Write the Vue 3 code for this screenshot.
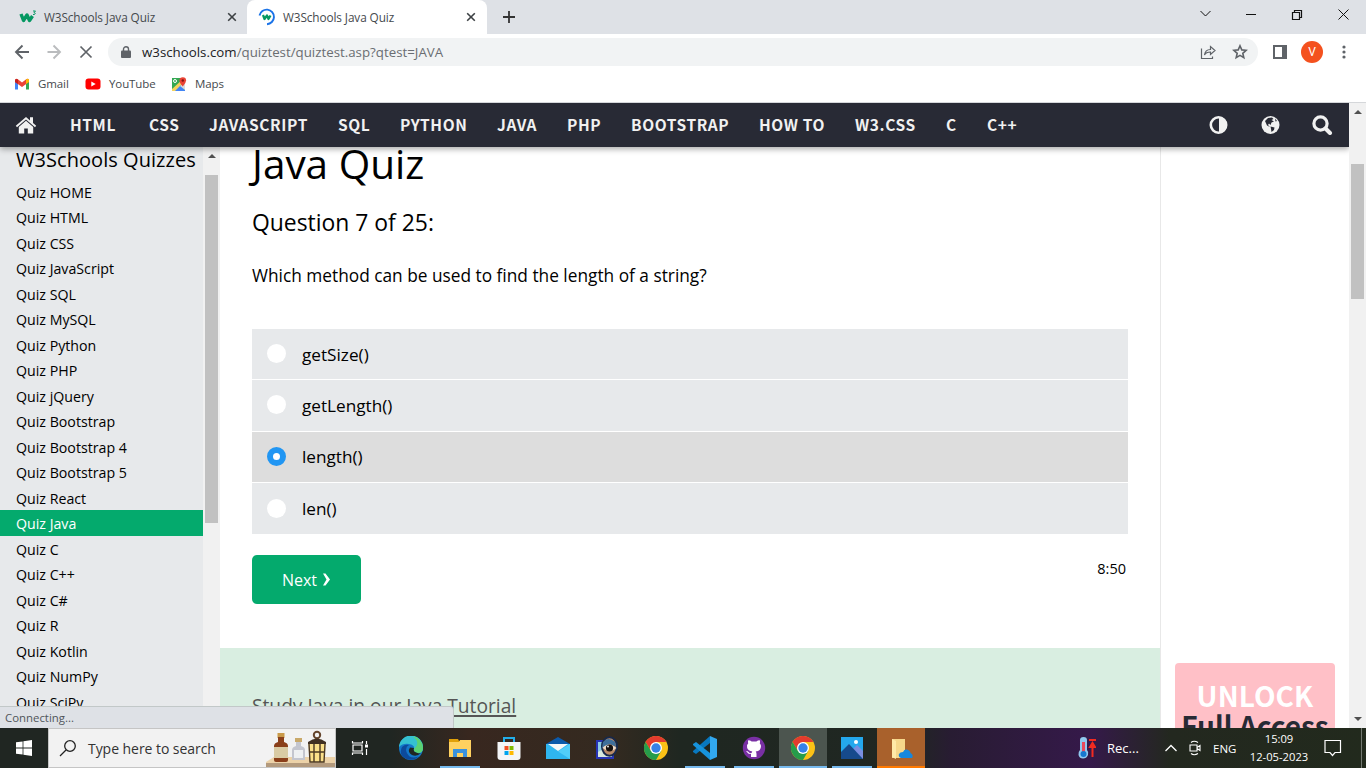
<script setup>
const navItems = ['HTML', 'CSS', 'JAVASCRIPT', 'SQL', 'PYTHON', 'JAVA', 'PHP', 'BOOTSTRAP', 'HOW TO', 'W3.CSS', 'C', 'C++']
const quizzes = ['HOME', 'HTML', 'CSS', 'JavaScript', 'SQL', 'MySQL', 'Python', 'PHP', 'jQuery', 'Bootstrap', 'Bootstrap 4', 'Bootstrap 5', 'React', 'Java', 'C', 'C++', 'C#', 'R', 'Kotlin', 'NumPy', 'SciPy']
const answers = ['getSize()', 'getLength()', 'length()', 'len()']
const apps = [
  { id: 'edge' },
  { id: 'explorer', open: true },
  { id: 'store' },
  { id: 'mail' },
  { id: 'eye' },
  { id: 'chrome' },
  { id: 'code', open: true },
  { id: 'github', open: true },
  { id: 'chrome', open: true, active: true },
  { id: 'photos', open: true },
  { id: 'drive', alert: true },
]
</script>

<template>
  <div class="screen">
    <div class="tabs">
      <div class="tab first">
        <svg class="fav" viewBox="0 0 18 18"><path d="M2 6l2.500 6.500L8 7l2.500 5.500L13.500 8" fill="none" stroke="#059862" stroke-width="3.400" stroke-linejoin="round" /><path d="M14 3h2.500L15 4.600c2 0 1.500 2.500-1 1.800" fill="none" stroke="#059862" /></svg>
        <span class="tab-title">W3Schools Java Quiz</span>
        <svg class="x" viewBox="0 0 10 10"><path d="M1.200 1.200l7.600 7.600M8.800 1.200l-7.600 7.600" /></svg>
      </div>
      <div class="tab current">
        <svg class="fav" viewBox="0 0 18 18"><path d="M1.500 7.500A7.300 7.300 0 1 1 9 16.200" fill="none" stroke="#1a73e8" stroke-width="1.900" /><path d="M5 7l1.500 4L9 7.500l1.500 3.500 2-3.500" fill="none" stroke="#059862" stroke-width="2.200" stroke-linejoin="round" /></svg>
        <span class="tab-title">W3Schools Java Quiz</span>
        <svg class="x" viewBox="0 0 10 10"><path d="M1.200 1.200l7.600 7.600M8.800 1.200l-7.600 7.600" /></svg>
      </div>
      <svg class="plus" viewBox="0 0 12 12"><path d="M6 0v12M0 6h12" stroke="#333" stroke-width="1.800" /></svg>
      <svg class="winctl" viewBox="0 0 160 20" fill="none" stroke="#111"><path d="M4.500 8l5 5 5-5" /><path d="M50 11.500h10" /><path d="M96.500 9.500h7v7h-7zM98.500 9.500v-2h7v7h-2" stroke-width="1.200" /><path d="M142.500 6.500l10 10M152.500 6.500l-10 10" /></svg>
    </div>

    <div class="toolbar">
      <svg class="arrows" viewBox="0 0 84 20" fill="none" stroke-width="1.900"><path d="M15 10H2.500M8.500 3.500L2 10l6.500 6.500" stroke="#5f6368" /><path d="M33.500 10H46M39.500 3.500L46 10l-6.500 6.500" stroke="#babcbe" /><path d="M66.500 4.500l11 11M77.500 4.500l-11 11" stroke="#5f6368" stroke-width="1.700" /></svg>
      <div class="address">
        <svg class="lock" viewBox="0 0 10 12"><path d="M1 4.500h8q1 0 1 1V11q0 1-1 1H1q-1 0-1-1V5.500q0-1 1-1z" fill="#5f6368" /><path d="M2.500 5V3a2.500 2.200 0 0 1 5 0v2" fill="none" stroke="#5f6368" stroke-width="1.400" /></svg>
        <span class="url"><b>w3schools.com</b>/quiztest/quiztest.asp?qtest=JAVA</span>
        <svg class="share" viewBox="0 0 48 16" fill="none" stroke="#5f6368" stroke-width="1.200"><path d="M1.500 4.500v10h11v-2" /><path d="M4.500 11c.5-4 3-5.500 6-5.500V2.500l4.500 4-4.500 4v-2.500c-3 0-5 1-6 3z" /><path d="M40 1.800l1.800 4.100 4.300.4-3.300 3 1 4.400-3.800-2.300-3.800 2.300 1-4.400-3.300-3 4.300-.4z" stroke-width="1.600" /></svg>
      </div>
      <svg class="panel" viewBox="0 0 14 14"><path d="M1 1h12v12H1z" fill="#fff" stroke="#5f6368" stroke-width="2" /><path d="M9 1h5v12H9z" fill="#5f6368" /></svg>
      <span class="avatar">V</span>
      <svg class="dots" viewBox="0 0 4 14" fill="#5f6368"><circle cx="2" cy="2" r="1.600" /><circle cx="2" cy="7" r="1.600" /><circle cx="2" cy="12" r="1.600" /></svg>
    </div>

    <div class="bookmarks">
      <svg viewBox="0 0 16 14"><path d="M1 3v9.500h3V6z" fill="#4285f4" /><path d="M12 6v6.500h3V3z" fill="#34a853" /><path d="M1 3.500Q1 1 3.500 2L8 5.500 12.500 2Q15 1 15 3.500V5L8 10 1 5z" fill="#ea4335" /><path d="M12 2.500Q15 .5 15 3.500V5l-3 2z" fill="#fbbc04" /><path d="M1 3.500Q1 1 4 2.500V7L1 5z" fill="#c5221f" /></svg>
      <span class="gm">Gmail</span>
      <svg viewBox="0 0 16 14"><rect x=".5" y="1.500" width="15" height="11" rx="3" fill="#f00" /><path d="M6.300 4.500v5l4.400-2.500z" fill="#fff" /></svg>
      <span class="yt">YouTube</span>
      <svg viewBox="0 0 16 14"><path d="M1 1h13v13H1z" fill="#34a853" /><path d="M3 14l6-6 5 5v1z" fill="#4285f4" /><path d="M1 14V12L11 3l2 2-9 9z" fill="#f4d35c" /><path d="M9 9l5-4v8z" fill="#dadce0" /><circle cx="4" cy="4" r="1.500" fill="none" stroke="#fff" /><path d="M8.500 3.500a3.300 3.300 0 0 1 6.600 0Q15 6 11.800 9.500 8.500 6 8.500 3.500z" fill="#ea4335" /><circle cx="11.800" cy="3.500" r="1.200" fill="#811411" /></svg>
      <span class="mp">Maps</span>
    </div>

    <div class="viewport">
      <div class="site">
        <nav class="nav">
          <svg class="home" viewBox="0 0 22 18" fill="#f1f1f1"><path d="M11 1L.8 9.800l1.200 1.400L11 3.500l9 7.700 1.200-1.400L18 7V1.200h-3v3.200z" /><path d="M11 4.800L3.800 11v6.500h5.400v-5h3.600v5h5.400V11z" /></svg>
          <div class="links"><span v-for="n in navItems" :key="n">{{ n }}</span></div>
          <svg class="tools" viewBox="0 0 124 20"><circle cx="9.500" cy="10" r="7.700" fill="none" stroke="#f1f1f1" stroke-width="2.600" /><path d="M10 2a8 8 0 0 1 0 16z" fill="#f1f1f1" /><circle cx="61.500" cy="10" r="9" fill="#f1f1f1" /><path d="M56 6l3-3 4-.5 1.500 1.500-2 1 2.500 1.500-2.500 1-1 2.500-1.500-1.500-1 1.500 2 2-3-1.500zM61.500 11.500l4 1-.5 2.500-2.500 2-.5-3zM66 3.500l2 2.500-1.500.5z" fill="#282a35" /><circle cx="111.500" cy="8.500" r="6.600" fill="none" stroke="#f1f1f1" stroke-width="3.200" /><path d="M116.500 13.500l4.500 4.500" stroke="#f1f1f1" stroke-width="4" stroke-linecap="round" /></svg>
        </nav>
        <div class="columns">
          <aside class="side">
            <h2>W3Schools Quizzes</h2>
            <ul><li v-for="q in quizzes" :key="q" :class="{ on: q === 'Java' }">Quiz {{ q }}</li></ul>
          </aside>
          <div class="scroll inner"><i class="up"></i><div class="thumb"></div></div>
          <main class="main">
            <div class="quiz">
              <h1>Java Quiz</h1>
              <h3>Question 7 of 25:</h3>
              <p class="question">Which method can be used to find the length of a string?</p>
              <div class="answers">
                <label v-for="a in answers" :key="a" class="answer" :class="{ picked: a === 'length()' }"><i class="radio"></i><span>{{ a }}</span></label>
              </div>
              <div class="submit">
                <button>Next <svg viewBox="0 0 9 13"><path d="M1 .5h2.500l4.500 6-4.500 6H1l3.500-6z" fill="#fff" /></svg></button>
                <span class="timer">8:50</span>
              </div>
            </div>
            <div class="study"><a>Study Java in our Java Tutorial</a></div>
          </main>
          <div class="right">
            <div class="promo"><div class="unlock">UNLOCK</div><div class="full">Full Access</div></div>
          </div>
        </div>
      </div>
      <div class="scroll outer"><i class="up"></i><div class="thumb"></div><i class="down"></i></div>
      <div class="status">Connecting...</div>
    </div>

    <div class="taskbar">
      <div class="start"><svg viewBox="0 0 16 16" fill="#fff"><path d="M0 2.300L6.600 1.400v6.200H0zM7.400 1.300L16 0v7.600H7.400zM0 8.400h6.600v6.200L0 13.700zM7.400 8.400H16V16l-8.600-1.300z" /></svg></div>
      <div class="search">
        <svg class="glass" viewBox="0 0 18 18" fill="none" stroke="#222" stroke-width="1.300"><circle cx="11" cy="7" r="5.300" /><path d="M7 11l-6 6" /></svg>
        <span>Type here to search</span>
        <svg class="bottles" viewBox="0 0 69 38">
          <path d="M0 33l8-5h61v10H0z" fill="#ecd2a8" /><path d="M0 34h69v4H0z" fill="#b39a7d" />
          <path d="M11.500 4h7v5h-7z" fill="#c99a4a" /><path d="M12 8h6v5q4 1 4 4v14q0 2-2 2h-10q-2 0-2-2V17q0-3 4-4z" fill="#8a3f1a" /><path d="M8 18h14v11H8z" fill="#d9cba4" />
          <path d="M29 9h7v4h-7z" fill="#c9a96a" /><path d="M30 13h5v4q4 1 4 4v10H26V21q0-3 4-4z" fill="#c4c6cf" /><path d="M28 21h9v8h-9z" fill="#eef0f2" />
          <circle cx="51" cy="6" r="3.200" fill="none" stroke="#65452d" stroke-width="2" /><path d="M42 13q9-7 18 0v2H42z" fill="#403022" /><path d="M42.500 15h17l-1 18h-15z" fill="#fbe08a" /><path d="M48 15v18M54 15v18M43 15l1 18h14l1-18M43 23h16" fill="none" stroke="#4b3823" stroke-width="1.400" />
        </svg>
      </div>
      <div class="taskview"><svg viewBox="0 0 18 16" fill="none" stroke="#fff" stroke-width="1.200"><path d="M2 5h9v6H2zM1.500 1v2h10V1M1.500 15v-2h10v2M15.500 1v3M15.500 9v6" /><path d="M14 4.500h3v3h-3z" fill="#fff" stroke="none" /></svg></div>
      <div v-for="(a, i) in apps" :key="i" class="app" :class="[a, a.id]">
        <svg v-if="a.id === 'edge'" viewBox="0 0 24 24"><circle cx="12" cy="12" r="12" fill="#1477c9" /><path d="M0 11A12 12 0 0 1 24 12q0 5-5 5-5-1-4-4 1-4-5-5Q4 7 0 11z" fill="#35c1d1" /><path d="M14 .3A12 12 0 0 1 24 12q0 5-5 5-5-1-4-4Q22 7 14 .3z" fill="#5bd273" /><path d="M10 9q-4 2-2.500 7 3 8 12 4.500-5 5-12 2.500Q-1 19 3 11q3-3 7-2z" fill="#0c4a9c" /><path d="M15 12q-2 4 5 5.500l2-.5q-4 4-9 2-5-3-2-7.500z" fill="#202622" /></svg>
        <svg v-else-if="a.id === 'explorer'" viewBox="0 0 24 24"><path d="M1 3h9l1 2h12v16H1z" fill="#e1a009" /><path d="M1 6h10l1-2h11v17H1z" fill="#ffd160" /><path d="M5 13h14v8h-4v-4H9v4H5z" fill="#3a91dd" /></svg>
        <svg v-else-if="a.id === 'store'" viewBox="0 0 24 24"><path d="M7 7V2h10v5" fill="none" stroke="#22aeea" stroke-width="2" /><path d="M.5 6h23v15q0 3-3 3h-17q-3 0-3-3z" fill="#f4f5f7" /><path d="M7.500 10h4v4h-4z" fill="#f25022" /><path d="M12.500 10h4v4h-4z" fill="#7fba00" /><path d="M7.500 15h4v4h-4z" fill="#00a4ef" /><path d="M12.500 15h4v4h-4z" fill="#ffb900" /></svg>
        <svg v-else-if="a.id === 'mail'" viewBox="0 0 24 24"><path d="M0 8l12-7 12 7z" fill="#0b5aab" /><path d="M0 8h24v15H0z" fill="#2fb6f0" /><path d="M24 8L12 15.500 24 23z" fill="#51cdf9" /><path d="M2 8h20l-10 7z" fill="#f5f7f8" /></svg>
        <svg v-else-if="a.id === 'eye'" viewBox="0 0 24 24"><path d="M1 4h18v19H1z" fill="#2734b4" /><path d="M3 6h14v15H3z" fill="#8ccbe4" /><path d="M3 16l7-4 7 9H3z" fill="#d7e8df" /><ellipse cx="14.500" cy="10.500" rx="7.500" ry="9.300" fill="#b98a68" stroke="#18294b" stroke-width="2" /><path d="M8 6q5-6 12 0l1 5-6-3-8 4z" fill="#3f6f9b" /><path d="M7.500 12q6-7 14 0-6 6-14 0z" fill="#f0dcc8" /><circle cx="14.500" cy="12" r="3.600" fill="#17110f" /><circle cx="13" cy="10.500" r=".9" fill="#fff" /></svg>
        <svg v-else-if="a.id === 'chrome'" viewBox="0 0 24 24"><circle cx="12" cy="12" r="12" fill="#fbc116" /><path d="M1.600 6A12 12 0 0 1 22.400 6H12L7 15z" fill="#e33b2e" /><path d="M1.600 6A12 12 0 0 0 12 24l5.200-9H7z" fill="#269c4b" /><circle cx="12" cy="12" r="6" fill="#fff" /><circle cx="12" cy="12" r="4.700" fill="#3581e8" /></svg>
        <svg v-else-if="a.id === 'code'" viewBox="0 0 24 24"><path d="M17 0v7L3 18l-3-2v-1z" fill="#0878bf" /><path d="M17 24v-7L3 6 0 8v1z" fill="#1793dc" /><path d="M17 0l7 3v18l-7 3z" fill="#32a8ef" /></svg>
        <svg v-else-if="a.id === 'github'" viewBox="0 0 24 24"><circle cx="12" cy="12" r="11.200" fill="#7930a4" /><path d="M9 21v-3q-3 .5-4-2l-1-1q2-.5 3 1.500 1 1 2.500.5l.8-1.500Q4.500 14.500 5 9.500q.2-1 1.200-2-.5-2 0-3.300 2 .1 3.500 1.300h4.600q1.500-1.200 3.500-1.300.5 1.300 0 3.300 1.200 1 1.200 2.500 0 5-5.300 5.500.8.800.8 2.500v3z" fill="#fff" /></svg>
        <svg v-else-if="a.id === 'photos'" viewBox="0 0 24 24"><path d="M1 1h22v22H1z" fill="#24a8ed" /><path d="M12 14l5-5 6 6v8H12z" fill="#7a8ee0" /><path d="M1 16l8-8 14 15H1z" fill="#164a8c" /><circle cx="16" cy="6" r="2" fill="#fff" /></svg>
        <svg v-else viewBox="0 0 24 24"><path d="M3 3h13v19H3z" fill="#f6d78b" /><path d="M3 3l4 2v18l-4-2z" fill="#ffe9a8" /><path d="M12 22q-3-1-2-4 1-2 4-2 2-4 6-1.500 1.500 1 1.500 2.500 3.500 2 1.500 5z" fill="#1688dd" /></svg>
      </div>
      <div class="tray">
        <svg class="thermo" viewBox="0 0 18 24"><path d="M2 4q0-3 3.500-3T9 4v10q2 2 1 5-1.500 3.500-5 3.500T.5 19Q0 16 2 14z" fill="#91c8ee" /><path d="M4 6h3v12H4z" fill="#e94a5c" /><circle cx="5.500" cy="18" r="3" fill="#1677cf" /><path d="M11 4h7M14.500 21V9M12 11l2.500-4 2.500 4z" fill="#f22b20" stroke="#f22b20" stroke-width="2" /></svg>
        <span class="rec">Rec...</span>
        <svg class="chev" viewBox="0 0 12 8"><path d="M.5 7L6 1.500 11.500 7" fill="none" stroke="#fff" stroke-width="1.300" /></svg>
        <svg class="cam" viewBox="0 0 12 16" fill="none" stroke="#fff" stroke-width="1.100"><path d="M1 5h7v6H1zM8 7.500l3-2v5l-3-2M2 2.500q3-2.500 7 0M2 13.500q3 2.500 7 0" /></svg>
        <span class="eng">ENG</span>
        <div class="clock"><div>15:09</div><div>12-05-2023</div></div>
        <svg class="notif" viewBox="0 0 18 18"><path d="M1 1.500h15.500v12H11l-2.500 3-2.500-3H1z" fill="none" stroke="#fff" stroke-width="1.200" /></svg>
        <i class="edgeline"></i>
      </div>
    </div>
  </div>
</template>

<style>
html, body { margin: 0; overflow: hidden; }
</style>
<style scoped>
* { box-sizing: border-box; }
svg { display: block; flex: none; }
.screen { width: 1366px; height: 768px; overflow: hidden; display: flex; flex-direction: column; background: #fff; font-family: "Open Sans", "Noto Sans", sans-serif; white-space: nowrap; }
.tabs { height: 34px; background: #dee1e6; display: flex; align-items: center; flex: none; }
.tab { height: 34px; display: flex; align-items: center; font-size: 11.8px; color: #45494d; }
.first { width: 247px; padding: 0 10px 0 19px; }
.current { width: 240px; padding: 0 11px; background: #fff; border-radius: 8px 8px 0 0; }
.fav { width: 18px; height: 18px; margin-right: 7px; }
.tab-title { flex: 1; letter-spacing: -.1px; }
.x { width: 10px; height: 10px; fill: none; stroke: #3c4043; stroke-width: 1.6; }
.plus { width: 12px; height: 12px; margin-left: 16px; }
.winctl { width: 160px; height: 20px; margin-left: 681px; margin-top: -9px; }
.toolbar { height: 36px; display: flex; align-items: center; padding-left: 14px; flex: none; }
.arrows { width: 84px; height: 20px; }
.address { margin-left: 10px; width: 1150px; height: 28px; border-radius: 14px; background: #f1f3f4; display: flex; align-items: center; padding: 0 10px 0 13px; }
.lock { width: 10px; height: 12px; }
.url { margin-left: 11px; flex: 1; font-size: 13.3px; color: #6a6e72; letter-spacing: 0; }
.url b { font-weight: 400; color: #202124; }
.share { width: 48px; height: 16px; }
.panel { width: 14px; height: 14px; margin-left: 15px; }
.avatar { width: 22px; height: 22px; border-radius: 50%; background: #f4511e; color: #fff; margin-left: 14px; font: 12px/22px Roboto, sans-serif; text-align: center; }
.dots { width: 4px; height: 14px; margin-left: 19px; }
.bookmarks { height: 33px; border-bottom: 1px solid #d5d7da; display: flex; align-items: center; padding: 0 0 5px 14px; font-size: 11.500px; color: #45494d; flex: none; }
.bookmarks svg { width: 16px; height: 14px; }
.bookmarks span { margin-left: 8px; letter-spacing: -.1px; }
.gm { width: 47px; }
.yt { width: 62px; }
.viewport { height: 625px; display: flex; position: relative; flex: none; overflow: hidden; }
.site { width: 1349px; height: 625px; overflow: hidden; }
.nav { height: 44px; background: #282a35; display: flex; align-items: center; position: relative; z-index: 2; box-shadow: 0 2px 6px rgba(0, 0, 0, .35); padding-left: 15px; }
.home { width: 22px; height: 18px; }
.links { margin-left: 33px; margin-top: -1px; width: 1139px; display: grid; grid-template-columns: 79px 60px 129px 62px 97px 70px 64px 128px 96px 91px 41px 60px; color: #f1f1f1; font: 700 15.5px/43px "Noto Sans CJK SC", sans-serif; letter-spacing: .6px; }
.tools { width: 124px; height: 20px; margin-top: -1px; }
.columns { display: flex; height: 581px; }
.side { width: 203px; background: #e7e9eb; overflow: hidden; color: #000; }
.side h2 { margin: 0 0 0 16px; height: 31.500px; font-size: 20px; line-height: 26px; font-weight: 400; letter-spacing: .05px; }
.side ul { margin: 0; padding: 0; list-style: none; }
.side li { height: 25.5px; line-height: 27px; padding-left: 16px; font-size: 14.2px; }
.side li.on { background: #04aa6d; color: #fff; }
.scroll { width: 17px; background: #f1f1f1; display: flex; flex-direction: column; align-items: center; }
.scroll .thumb { width: 13px; background: #c1c1c1; }
.scroll i { border: 4px solid transparent; }
.scroll .up { border-top: 0; border-bottom: 4px solid #505050; }
.scroll .down { border-bottom: 0; border-top: 4px solid #505050; margin-top: auto; margin-bottom: 7px; }
.inner .up { margin-top: 7px; }
.inner .thumb { margin-top: 17px; height: 348px; }
.outer .up { margin-top: 7px; }
.outer .thumb { margin-top: 50px; height: 135px; }
.main { width: 940px; color: #000; }
.quiz { height: 511px; padding: 0 32px; }
h1, h3, p { margin: 0; font-weight: 400; }
h1 { font-size: 40.5px; line-height: 54px; margin-top: -10px; height: 54px; }
h3 { font-size: 22.9px; line-height: 32px; margin-top: 16px; }
.question { font-size: 17.300px; line-height: 26px; margin-top: 24px; height: 26px; }
.answers { margin-top: 40px; width: 876px; display: flex; flex-direction: column; }
.answer { height: 51.3px; border-bottom: 1px solid #fff; background: #e7e9eb; display: flex; align-items: center; padding-left: 15px; font-size: 17.2px; }
.answer:last-child { border-bottom: 0; }
.picked { background: #ddd; }
.radio { width: 19px; height: 19px; border-radius: 50%; background: #fff; margin: -1px 16px 0 0; }
.picked .radio { border: 6px solid #2196f3; }
.submit { margin-top: 21px; display: flex; justify-content: space-between; width: 874px; }
button { width: 109px; height: 49px; border: 0; border-radius: 5px; padding: 0; background: #04aa6d; color: #fff; font-family: inherit; font-size: 16px; display: flex; align-items: center; justify-content: center; gap: 5px; }
button svg { width: 9px; height: 13px; }
.timer { font-size: 14.500px; line-height: 27px; }
.study { height: 80px; background: #d9eee1; padding: 43px 32px 0; font-size: 19.2px; line-height: 30px; }
.study a { color: #555; text-decoration: underline; text-decoration-thickness: 2px; text-underline-offset: 2px; }
.right { width: 189px; border-left: 1px solid #e8e8e8; padding: 516px 0 0 14px; overflow: hidden; }
.promo { width: 160px; height: 110px; border-radius: 4px; background: #ffc0c7; text-align: center; font: 700 28px/30px "Noto Sans CJK SC", sans-serif; padding-top: 17px; }
.unlock { color: #fff; letter-spacing: .1px; }
.full { color: #282a35; margin: 0 -10px; }
.status { position: absolute; left: 0; bottom: 0; z-index: 3; width: 454px; height: 22px; background: #dee1e6; border: 1px solid #c2c8c8; border-left: 0; border-bottom: 0; border-radius: 0 4px 0 0; padding-left: 5px; color: #50555a; font-size: 11.400px; line-height: 21px; }
.taskbar { height: 40px; flex: none; display: flex; color: #fff; background: linear-gradient(90deg, #202622 0, #202622 390px, #38271f 470px, #342a20 610px, #1f2721 680px, #202722 910px, #281c32 950px, #35194a 1090px, #23281f 1170px, #222a1d 1366px); }
.start { width: 48px; padding: 12px 16px; }
.start svg { width: 16px; height: 16px; }
.search { width: 288px; border: 1px solid #c5c5c5; background: #f2f2f2; display: flex; align-items: center; padding-left: 10px; color: #333; font-size: 14px; }
.glass { width: 18px; height: 18px; margin-right: 11px; }
.search span { flex: 1; letter-spacing: -.05px; }
.bottles { width: 69px; height: 38px; }
.taskview { width: 50px; padding: 12px 15px; }
.taskview svg { width: 18px; height: 16px; }
.app { width: 49px; height: 40px; display: flex; justify-content: center; align-items: center; border: solid transparent; border-width: 0 4px; }
.app svg { width: 24px; height: 24px; }
.open { background: linear-gradient(#76b9ed, #76b9ed) bottom / 40px 2px no-repeat padding-box; }
.active { border: 0; width: 48px; margin-left: 1px; background: linear-gradient(#76b9ed, #76b9ed) bottom / 100% 2px no-repeat, #4c554f; }
.alert { border: 0; width: 48px; margin-left: 1px; background: linear-gradient(#ff7900, #ff7900) bottom / 100% 2px no-repeat, #a9612c; }
.tray { margin-left: auto; width: 288px; display: flex; align-items: center; font-size: 13px; }
.thermo { width: 18px; height: 24px; }
.rec { width: 58px; margin-left: 11px; }
.chev { width: 12px; height: 8px; }
.cam { width: 12px; height: 16px; margin-left: 12px; }
.eng { width: 36px; margin-left: 12px; font-size: 11.500px; }
.clock { width: 60px; font-size: 11.200px; line-height: 18px; text-align: center; }
.clock div { height: 18px; }
.notif { width: 18px; height: 18px; margin-left: 15px; }
.edgeline { margin-left: auto; width: 1px; height: 40px; background: #737971; margin-right: 4px; }
</style>
